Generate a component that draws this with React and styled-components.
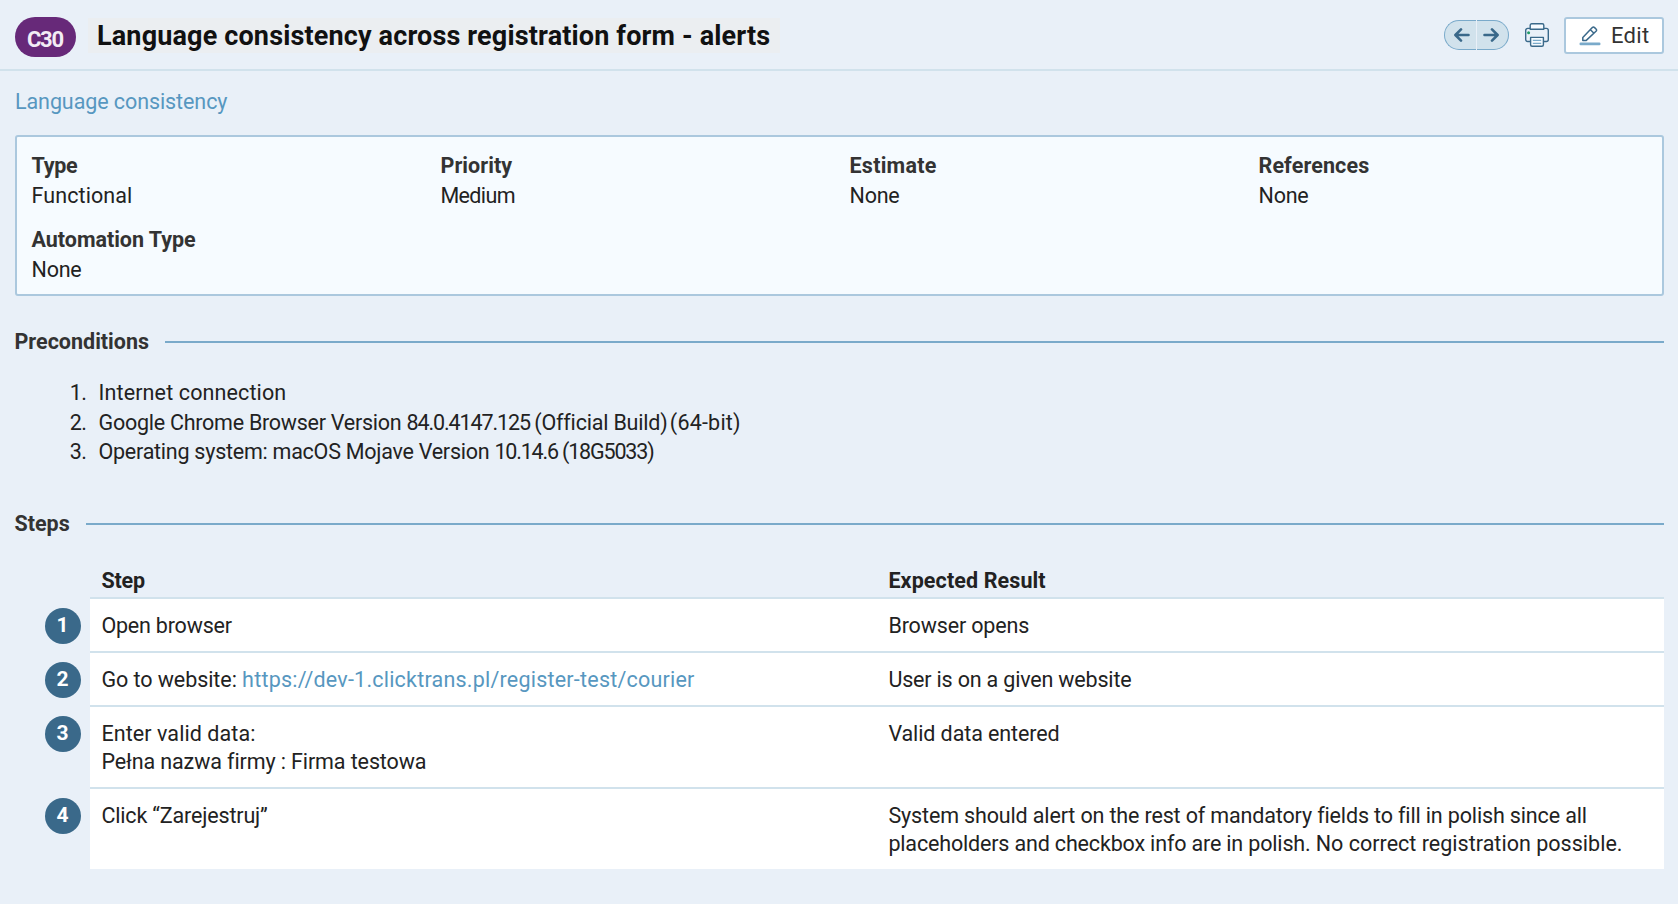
import React from 'react';
import styled, { createGlobalStyle } from 'styled-components';

const GlobalStyle = createGlobalStyle`
  *, *::before, *::after { box-sizing: border-box; }
  body {
    margin: 0;
    min-height: 100vh;
    background: #e9f0f8;
    color: #222;
    font: 400 21.5px/30px Roboto, "Liberation Sans", sans-serif;
  }
`;

const Track = styled.span`
  letter-spacing: ${(p) => p.$ls || 0}px;
  white-space: pre;
`;

const Header = styled.header`
  display: flex;
  align-items: flex-start;
  height: 71px;
  padding: 17px 14px 0 15px;
  border-bottom: 2px solid #d1e2ec;
`;

const Badge = styled.span`
  flex: none;
  width: 61px;
  height: 40px;
  padding-left: 12px;
  border-radius: 20px;
  background: #672979;
  color: #f3ecf5;
  font-size: 22px;
  font-weight: 700;
  line-height: 45px;
  letter-spacing: -1.3px;
  white-space: nowrap;
`;

const Title = styled.h1`
  margin: 1px 0 0 12px;
  padding: 0 10px 0 9px;
  height: 35px;
  background: #ebeef1;
  color: #111;
  font-size: 27px;
  font-weight: 700;
  line-height: 36px;
  letter-spacing: 0.15px;
  white-space: nowrap;
`;

const Actions = styled.div`
  display: flex;
  align-items: flex-start;
  margin-left: auto;
`;

const Pager = styled.div`
  display: flex;
  gap: 1px;
  margin: 3px 16px 0 0;
`;

const PagerHalf = styled.button`
  display: flex;
  align-items: center;
  justify-content: center;
  width: 32px;
  height: 30px;
  padding: 0;
  border: 1px solid #7aaaca;
  background: #d1e2ec;
  ${(p) =>
    p.$side === 'left'
      ? 'border-right: 0; border-radius: 15px 0 0 15px; padding-left: 3px;'
      : 'border-left: 0; border-radius: 0 15px 15px 0; padding-right: 3px;'}
`;

const PrintButton = styled.button`
  display: flex;
  margin: 6px 15px 0 0;
  padding: 0;
  border: 0;
  background: none;
`;

const EditButton = styled.button`
  display: flex;
  align-items: flex-start;
  width: 100px;
  height: 37px;
  padding: 0 0 0 13px;
  border: 2px solid #abc8de;
  border-radius: 3px;
  background: #fff;
  color: #333;
  font: 400 22px/33px Roboto, "Liberation Sans", sans-serif;
  letter-spacing: 0.3px;

  svg { margin: 7px 10px 0 0; }
`;

const Main = styled.main`
  padding: 16px 14px 0 15px;
`;

const Link = styled.a`
  color: #5797c0;
  text-decoration: none;
  letter-spacing: ${(p) => p.$ls || 0}px;
`;

const Crumb = styled.div`
  height: 48px;
`;

const InfoBox = styled.dl`
  display: grid;
  grid-template-columns: 409px 409px 409px 1fr;
  row-gap: 14px;
  margin: 0;
  padding: 14px 0 9px 14.5px;
  border: 2px solid #abc8de;
  border-radius: 3px;
  background: #f6fbff;
`;

const Label = styled.dt`
  color: #333;
  font-weight: 700;
  letter-spacing: ${(p) => p.$ls || 0}px;
`;

const Value = styled.dd`
  margin: 0;
  letter-spacing: ${(p) => p.$ls || 0}px;
`;

const SectionTitle = styled.h2`
  display: flex;
  align-items: center;
  gap: ${(p) => p.$gap}px;
  margin: ${(p) => p.$top}px 0 0 -0.5px;
  color: #333;
  font-size: 21.5px;
  font-weight: 700;
  line-height: 30px;

  &::after {
    content: '';
    flex: 1;
    height: 2px;
    background: #7aaaca;
  }
`;

const Conditions = styled.ol`
  margin: 21px 0 0;
  padding: 0;
  list-style: none;
  line-height: 29.6px;
`;

const Condition = styled.li`
  display: grid;
  grid-template-columns: 71.5px 1fr;
  column-gap: 12px;
`;

const Marker = styled.span`
  text-align: right;
  letter-spacing: -0.5px;
`;

const Steps = styled.div`
  margin-top: 25.8px;
`;

const StepRow = styled.div`
  display: grid;
  grid-template-columns: 75px 1fr;
`;

const HeadCells = styled.div`
  display: grid;
  grid-template-columns: 1fr 1fr;
  height: 34px;
  border-bottom: 2px solid #d1e2ec;
  font-weight: 700;
  line-height: 31px;
`;

const Cells = styled.div`
  display: grid;
  grid-template-columns: 1fr 1fr;
  padding: 13px 0 11px;
  border-bottom: ${(p) => (p.$last ? '0' : '2px solid #d1e2ec')};
  background: #fff;
  line-height: 28px;
`;

const Cell = styled.div`
  padding-left: 11.4px;
`;

const Line = styled.div`
  white-space: nowrap;
`;

const StepNumber = styled.span`
  display: block;
  width: 36px;
  height: 36px;
  margin: 9px 0 0 30px;
  padding-right: 1px;
  border-radius: 50%;
  background: #3a698a;
  color: #fff;
  font-size: 21px;
  font-weight: 700;
  line-height: 34px;
  text-align: center;
`;

const ArrowIcon = ({ flip }) => (
  <svg width="16" height="14" viewBox="0 0 16 14" fill="none" stroke="#3a698a" strokeWidth="2.6" strokeLinecap="round" strokeLinejoin="round">
    <path d={flip ? 'M1.5 7H14.3M9 1.4L14.6 7L9 12.6' : 'M14.5 7H1.7M7 1.4L1.4 7L7 12.6'} />
  </svg>
);

const PrinterIcon = () => (
  <svg width="24" height="24" viewBox="0 0 24 24" fill="none" stroke="#3a698a" strokeWidth="1.4" strokeLinejoin="round">
    <path d="M5.6 18.5H2.7A2 2 0 0 1 .7 16.5V7.4A2 2 0 0 1 2.7 5.4H21.3A2 2 0 0 1 23.3 7.4V16.5A2 2 0 0 1 21.3 18.5H18.4" />
    <path fill="#f6fbff" d="M5.2 6.3V2.2A1.5 1.5 0 0 1 6.7.7H17.3A1.5 1.5 0 0 1 18.8 2.2V6.3Z" />
    <path fill="#f6fbff" d="M5.6 14.4H18.4V21.8A1.5 1.5 0 0 1 16.9 23.3H7.1A1.5 1.5 0 0 1 5.6 21.8Z" />
    <path stroke="#7aaaca" d="M7.8 17.4H16.2M7.8 20.4H16.2" />
    <circle cx="3.6" cy="9.8" r="1.5" fill="#219c68" stroke="none" />
  </svg>
);

const PencilIcon = () => (
  <svg width="22" height="20" viewBox="0 0 22 20" fill="none" stroke="#3a698a" strokeWidth="1.5" strokeLinejoin="round">
    <path d="M3.8 14.6V11.6L13.3 1.6Q14.4.5 15.6 1.6L17 3Q18.1 4.2 17 5.3L7 14.6ZM11.4 3.8L15 7.2" />
    <rect x="0.5" y="16.6" width="21" height="2.6" rx="1.2" fill="#7aaaca" stroke="none" />
  </svg>
);

const FIELDS = [
  ['Type', -0.3, 'Functional', 0.1],
  ['Priority', 0.05, 'Medium', -0.65],
  ['Estimate', 0.25, 'None', -0.2],
  ['References', 0.12, 'None', -0.2],
  ['Automation Type', -0.03, 'None', -0.2],
];

/* A line is a list of [text, letter spacing, is link] runs. */
const CONDITIONS = [
  [['Internet connection', 0.13]],
  [
    ['Google Chrome Browser Version ', -0.255],
    ['84.0.4147.125 ', -1.1],
    ['(Official Build)', -0.2],
    [' ', -3],
    ['(64-bit)', 0.2],
  ],
  [
    ['Operating system: macOS Mojave Version ', -0.25],
    ['10.14.6 ', -1.2],
    ['(18G5033)', -1.15],
  ],
];

const STEPS = [
  { step: [[['Open browser', -0.2]]], result: [[['Browser opens', -0.15]]] },
  {
    step: [[['Go to website: ', -0.06], ['https://dev-1.clicktrans.pl/register-test/courier', 0.215, true]]],
    result: [[['User is on a given website', -0.18]]],
  },
  {
    step: [[['Enter valid data:', 0.08]], [['Pełna nazwa firmy : Firma testowa', -0.11]]],
    result: [[['Valid data entered', -0.1]]],
  },
  {
    step: [[['Click “Zarejestruj”', -0.16]]],
    result: [
      [['System should alert on the rest of mandatory fields to fill in polish since all', -0.145]],
      [
        ['placeholders and checkbox info are in polish. ', -0.165],
        ['No correct registration possible.', 0.02],
      ],
    ],
  },
];

const Runs = ({ runs }) =>
  runs.map(([text, ls, link]) =>
    link ? (
      <Link key={text} href="#" $ls={ls}>{text}</Link>
    ) : (
      <Track key={text} $ls={ls}>{text}</Track>
    ),
  );

const Lines = ({ items }) => items.map((runs, i) => <Line key={i}><Runs runs={runs} /></Line>);

export default function App() {
  return (
    <>
      <GlobalStyle />
      <Header>
        <Badge>C30</Badge>
        <Title>Language consistency across registration form - alerts</Title>
        <Actions>
          <Pager>
            <PagerHalf $side="left" aria-label="Previous"><ArrowIcon /></PagerHalf>
            <PagerHalf $side="right" aria-label="Next"><ArrowIcon flip /></PagerHalf>
          </Pager>
          <PrintButton aria-label="Print"><PrinterIcon /></PrintButton>
          <EditButton><PencilIcon />Edit</EditButton>
        </Actions>
      </Header>
      <Main>
        <Crumb><Link href="#" $ls={-0.087}>Language consistency</Link></Crumb>
        <InfoBox>
          {FIELDS.map(([label, labelLs, value, valueLs]) => (
            <div key={label}>
              <Label $ls={labelLs}>{label}</Label>
              <Value $ls={valueLs}>{value}</Value>
            </div>
          ))}
        </InfoBox>
        <SectionTitle $top={31} $gap={16}>Preconditions</SectionTitle>
        <Conditions>
          {CONDITIONS.map((runs, i) => (
            <Condition key={i}>
              <Marker>{i + 1}.</Marker>
              <Line><Runs runs={runs} /></Line>
            </Condition>
          ))}
        </Conditions>
        <SectionTitle $top={42.4} $gap={16.2}>Steps</SectionTitle>
        <Steps>
          <StepRow>
            <span />
            <HeadCells>
              <Cell><Track $ls={-0.2}>Step</Track></Cell>
              <Cell><Track $ls={0.11}>Expected Result</Track></Cell>
            </HeadCells>
          </StepRow>
          {STEPS.map(({ step, result }, i) => (
            <StepRow key={i}>
              <StepNumber>{i + 1}</StepNumber>
              <Cells $last={i === STEPS.length - 1}>
                <Cell><Lines items={step} /></Cell>
                <Cell><Lines items={result} /></Cell>
              </Cells>
            </StepRow>
          ))}
        </Steps>
      </Main>
    </>
  );
}
